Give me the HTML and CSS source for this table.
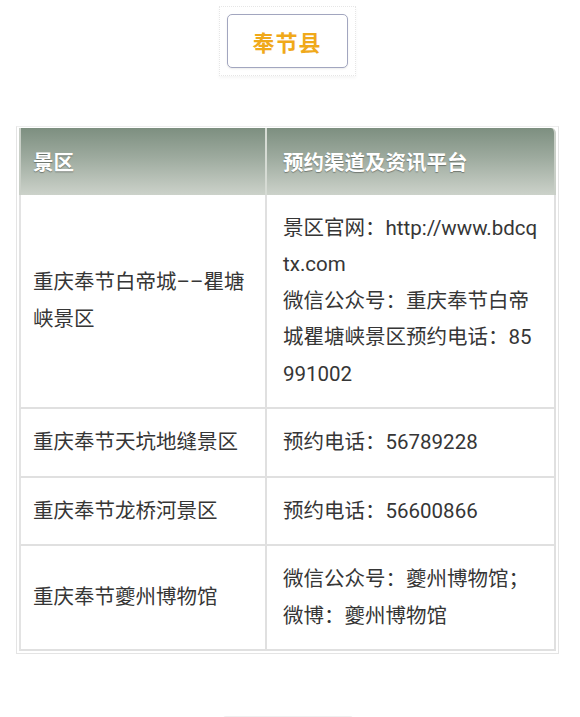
FILE: index.html
```html
<!DOCTYPE html>
<html lang="zh-CN">
<head>
<meta charset="utf-8">
<title>奉节县</title>
<link rel="stylesheet" href="styles.css">
</head>
<body>
<div class="page">
  <div class="title-wrap">
    <div class="title-frame">
      <div class="title-box">奉节县</div>
    </div>
  </div>

  <div class="table-wrap">
    <table class="spots">
      <thead>
        <tr>
          <th class="col-a">景区</th>
          <th class="col-b">预约渠道及资讯平台</th>
        </tr>
      </thead>
      <tbody>
        <tr>
          <td class="col-a">重庆奉节白帝城––瞿塘峡景区</td>
          <td class="col-b">景区官网：http://www.bdcqtx.com<br>微信公众号：重庆奉节白帝城瞿塘峡景区预约电话：85991002</td>
        </tr>
        <tr>
          <td class="col-a">重庆奉节天坑地缝景区</td>
          <td class="col-b">预约电话：56789228</td>
        </tr>
        <tr>
          <td class="col-a">重庆奉节龙桥河景区</td>
          <td class="col-b">预约电话：56600866</td>
        </tr>
        <tr>
          <td class="col-a">重庆奉节夔州博物馆</td>
          <td class="col-b">微信公众号：夔州博物馆；<br>微博：夔州博物馆</td>
        </tr>
      </tbody>
    </table>
  </div>

  <div class="next-strip"></div>
</div>
</body>
</html>
```

FILE: styles.css
```css
html, body {
  margin: 0;
  padding: 0;
  background: #ffffff;
}

body {
  font-family: Roboto, "Noto Sans CJK SC", sans-serif;
  color: #363636;
}

.page {
  width: 580px;
  height: 717px;
  overflow: hidden;
}

.title-wrap {
  display: flex;
  justify-content: center;
  padding: 6px 6px 0 0;
}

.title-frame {
  border: 1px dotted #e6e6e6;
  padding: 7px;
  box-shadow: 0 2px 3px rgba(0, 0, 0, 0.04);
}

.title-box {
  width: 119px;
  height: 52px;
  border: 1.5px solid #a2a6bf;
  border-radius: 5px;
  background: #ffffff;
  display: flex;
  align-items: center;
  justify-content: center;
  font-family: "Noto Sans CJK SC", sans-serif;
  font-weight: 700;
  font-size: 22px;
  letter-spacing: 1px;
  color: #f0a91a;
  box-shadow: 0 1px 2px rgba(0, 0, 0, 0.08);
}

.table-wrap {
  margin: 50px 0 0 16px;
  width: 537px;
  border: 1px solid #e4e4e4;
  border-top-color: #eeeeee;
  padding: 1px 2px 2px 2px;
}

.spots {
  width: 537px;
  border-collapse: separate;
  border-spacing: 0;
  table-layout: fixed;
}

.spots th,
.spots td {
  box-sizing: border-box;
  text-align: left;
  vertical-align: middle;
  font-size: 20.5px;
  line-height: 36.5px;
  padding: 15px 16px 15px 16px;
  word-break: break-all;
}

.spots .col-a {
  width: 248px;
  padding-left: 12px;
}

.spots .col-b {
  width: 289px;
}

.spots th {
  color: #ffffff;
  font-weight: 700;
  font-family: "Noto Sans CJK SC", sans-serif;
  text-shadow: 0 1px 1px rgba(0, 0, 0, 0.35);
  background: linear-gradient(to bottom, #7d8f80 0%, #9eab9f 45%, #ccd2ca 100%);
  padding-top: 15px;
  padding-bottom: 15px;
}

.spots th.col-a {
  border-left: 2px solid #c9cfc7;
  border-right: 2px solid #d6dbd4;
}

.spots th.col-b {
  border-right: 2px solid #c9cfc7;
  border-top-right-radius: 5px;
}

.spots td {
  border-right: 2px solid #e0e0e0;
  border-bottom: 2px solid #e0e0e0;
}

.spots td.col-a {
  border-left: 2px solid #e3e3e3;
}

.next-strip {
  width: 130px;
  height: 12px;
  margin: 62px auto 0 auto;
  position: relative;
  left: -2px;
  background: #efefef;
  border-radius: 3px 3px 0 0;
}
```
